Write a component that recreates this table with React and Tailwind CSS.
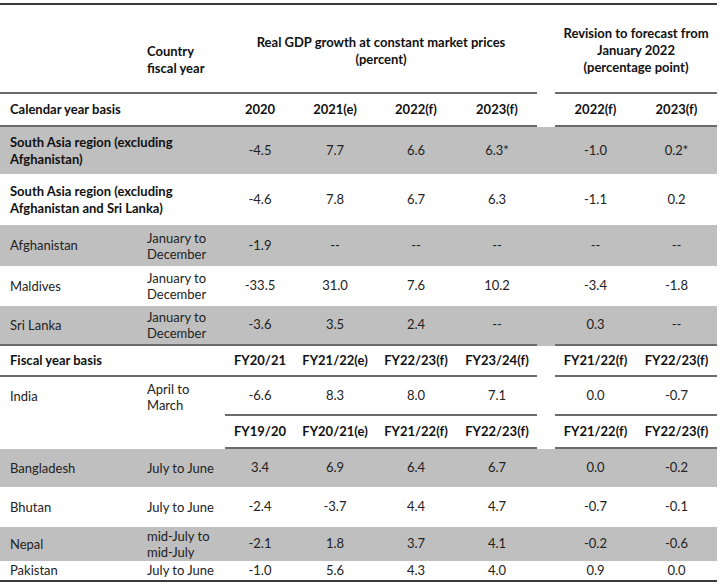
import React from "react";

const cols = "grid grid-cols-[140px_85px_70px_80px_82px_80px_18px_81px_81px]";
const line = "border-b-2 border-[#6b6b6b]";

const DataRow = ({ name, period, values, bold, gray, h, bottom }) => (
    <div className={`${cols} ${h} ${gray ? "bg-[#bfbfbf]" : ""}`}>
        <div className={`flex items-center pl-[10px] whitespace-nowrap leading-[17px] ${period ? "" : "col-span-2"} ${bold ? "font-bold text-[#111]" : ""} ${bottom ? line : ""}`}>
            {name}
        </div>
        {period && <div className={`flex items-center pl-[7px] leading-[16px] ${bottom ? line : ""}`}>{period}</div>}
        {values.slice(0, 4).map((v, i) => (
            <div key={i} className={`flex items-center justify-center ${bottom ? line : ""}`}>{v}</div>
        ))}
        <div />
        {values.slice(4).map((v, i) => (
            <div key={i} className={`flex items-center justify-center ${bottom ? line : ""}`}>{v}</div>
        ))}
    </div>
);

const HeadRow = ({ label, years, h, leftLine = true }) => (
    <div className={`${cols} ${h} font-bold text-[#111]`}>
        <div className={`flex items-center pl-[10px] ${leftLine ? line : ""}`}>{label}</div>
        <div className={leftLine ? line : ""} />
        {years.slice(0, 4).map((y) => (
            <div key={y} className={`flex items-center justify-center ${line}`}>{y}</div>
        ))}
        <div />
        {years.slice(4).map((y) => (
            <div key={y} className={`flex items-center justify-center ${line}`}>{y}</div>
        ))}
    </div>
);

export default function App() {
    return (
        <div className="w-[720px] h-[585px] bg-white pt-[3px] text-[13px] text-[#222]" style={{ fontFamily: "Lato, 'Open Sans', sans-serif" }}>
            <div className="w-[717px]">
                {/* header */}
                <div className={`${cols} h-[91px] border-t-2 border-[#3a3a3a] font-bold text-[#111] leading-[17px]`}>
                    <div className={line} />
                    <div className={`pl-[7px] pt-[38px] ${line}`}>
                        Country
                        <br />
                        fiscal year
                    </div>
                    <div className={`col-span-4 text-center pt-[29px] ${line}`}>
                        Real GDP growth at constant market prices
                        <br />
                        (percent)
                    </div>
                    <div />
                    <div className={`col-span-2 text-center pt-[20px] ${line}`}>
                        Revision to forecast from
                        <br />
                        January 2022
                        <br />
                        (percentage point)
                    </div>
                </div>

                <HeadRow label="Calendar year basis" years={["2020", "2021(e)", "2022(f)", "2023(f)", "2022(f)", "2023(f)"]} h="h-[33px]" />

                <DataRow
                    name={<span>South Asia region (excluding<br />Afghanistan)</span>}
                    values={["-4.5", "7.7", "6.6", "6.3*", "-1.0", "0.2*"]}
                    bold gray h="h-[47px]"
                />
                <DataRow
                    name={<span>South Asia region (excluding<br />Afghanistan and Sri Lanka)</span>}
                    values={["-4.6", "7.8", "6.7", "6.3", "-1.1", "0.2"]}
                    bold h="h-[51px]"
                />
                <DataRow
                    name="Afghanistan"
                    period={<span>January to<br />December</span>}
                    values={["-1.9", "--", "--", "--", "--", "--"]}
                    gray h="h-[41px]"
                />
                <DataRow
                    name="Maldives"
                    period={<span>January to<br />December</span>}
                    values={["-33.5", "31.0", "7.6", "10.2", "-3.4", "-1.8"]}
                    h="h-[40px]"
                />
                <DataRow
                    name="Sri Lanka"
                    period={<span>January to<br />December</span>}
                    values={["-3.6", "3.5", "2.4", "--", "0.3", "--"]}
                    gray h="h-[40px]" bottom
                />

                <HeadRow label="Fiscal year basis" years={["FY20/21", "FY21/22(e)", "FY22/23(f)", "FY23/24(f)", "FY21/22(f)", "FY22/23(f)"]} h="h-[31px]" />

                <div className={`${cols} h-[39px]`}>
                    <div className="flex items-center pl-[10px]">India</div>
                    <div className="flex items-center pl-[7px] leading-[16px]">
                        <span>April to<br />March</span>
                    </div>
                    {["-6.6", "8.3", "8.0", "7.1"].map((v, i) => (
                        <div key={i} className={`flex items-center justify-center ${line}`}>{v}</div>
                    ))}
                    <div />
                    {["0.0", "-0.7"].map((v, i) => (
                        <div key={i} className={`flex items-center justify-center ${line}`}>{v}</div>
                    ))}
                </div>

                <HeadRow label="" years={["FY19/20", "FY20/21(e)", "FY21/22(f)", "FY22/23(f)", "FY21/22(f)", "FY22/23(f)"]} h="h-[33px]" leftLine={false} />

                <DataRow name="Bangladesh" period="July to June" values={["3.4", "6.9", "6.4", "6.7", "0.0", "-0.2"]} gray h="h-[38px]" />
                <DataRow name="Bhutan" period="July to June" values={["-2.4", "-3.7", "4.4", "4.7", "-0.7", "-0.1"]} h="h-[40px]" />
                <DataRow
                    name="Nepal"
                    period={<span>mid-July to<br />mid-July</span>}
                    values={["-2.1", "1.8", "3.7", "4.1", "-0.2", "-0.6"]}
                    gray h="h-[34px]"
                />
                <div className={`${cols} h-[21px] border-b-2 border-[#3a3a3a]`}>
                    <div className="flex items-center pl-[10px]">Pakistan</div>
                    <div className="flex items-center pl-[7px]">July to June</div>
                    {["-1.0", "5.6", "4.3", "4.0"].map((v, i) => (
                        <div key={i} className="flex items-center justify-center">{v}</div>
                    ))}
                    <div />
                    {["0.9", "0.0"].map((v, i) => (
                        <div key={i} className="flex items-center justify-center">{v}</div>
                    ))}
                </div>
            </div>
        </div>
    );
}
